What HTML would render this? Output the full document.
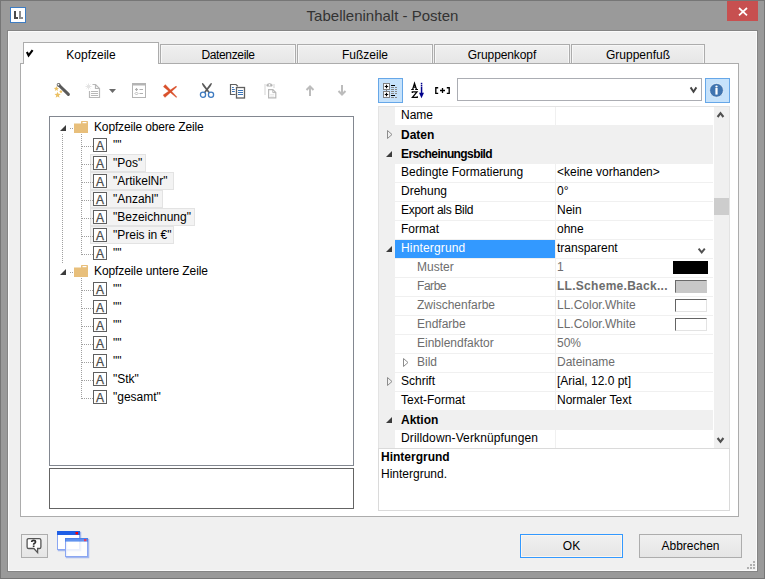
<!DOCTYPE html>
<html><head><meta charset="utf-8">
<style>
*{box-sizing:border-box;margin:0;padding:0}
html,body{width:765px;height:579px;overflow:hidden}
body{position:relative;background:#9a9a9a;font-family:"Liberation Sans",sans-serif;font-size:12px;color:#000}
.a{position:absolute}
svg{position:absolute;overflow:visible}
.t{position:absolute;white-space:nowrap;line-height:14px}
.tab{position:absolute;top:44px;width:136px;height:20px;border:1px solid #acacac;border-bottom:none;background:linear-gradient(#f0f0f0,#e5e5e5);box-shadow:inset 1px 1px 0 #f7f7f7,inset -1px 0 0 #f7f7f7}
.tab span{position:absolute;left:0;right:0;top:3px;text-align:center;white-space:nowrap}
.btn{position:absolute;border:1px solid #adadad;background:linear-gradient(#f0f0f0,#e5e5e5)}
</style></head><body>
<div class="a" style="left:0px;top:0px;width:765px;height:579px;border:1px solid #767676;"></div>
<div class="a" style="left:10px;top:7px;width:16px;height:16px;background:#fff;border:1px solid #3d7cc2;"></div>
<div class="a" style="left:14px;top:11px;width:2px;height:8px;background:#4a4a4a;"></div>
<div class="a" style="left:14px;top:17px;width:4px;height:2px;background:#4a4a4a;"></div>
<div class="a" style="left:19px;top:11px;width:2px;height:8px;background:#8c8c8c;"></div>
<div class="a" style="left:19px;top:17px;width:4px;height:2px;background:#8c8c8c;"></div>
<div class="t" style="left:0;width:765px;top:7px;text-align:center;font-size:15px;line-height:18px;color:#333">Tabelleninhalt - Posten</div>
<div class="a" style="left:727px;top:1px;width:31px;height:20px;background:#c75050;"></div>
<svg style="left:727px;top:1px" width="31" height="20"><path d="M12 7 L20 14.3 M20 7 L12 14.3" stroke="#fff" stroke-width="1.7"/></svg>
<div class="a" style="left:7px;top:30px;width:751px;height:542px;background:#f0f0f0;border:1px solid #858585;box-shadow:inset 1px 1px 0 #fbfbfb,inset -1px -1px 0 #fbfbfb"></div>
<div class="tab" style="left:160px;width:136px"><span style="letter-spacing:-0.35px">Datenzeile</span></div>
<div class="tab" style="left:297px;width:136px"><span style="letter-spacing:0px">Fußzeile</span></div>
<div class="tab" style="left:434px;width:136px"><span style="letter-spacing:-0.1px">Gruppenkopf</span></div>
<div class="tab" style="left:571px;width:134px"><span style="letter-spacing:0px">Gruppenfuß</span></div>
<div class="a" style="left:20px;top:63px;width:719px;height:454px;background:#fff;border:1px solid #acacac;"></div>
<div class="a" style="left:23px;top:42px;width:136px;height:22px;background:#fff;border:1px solid #acacac;border-bottom:none"></div>
<div class="t" style="left:23px;width:136px;top:48px;text-align:center">Kopfzeile</div>
<svg style="left:25px;top:49px" width="10" height="10"><path d="M1.9 3.0 L3.6 6.4 L7.6 1.1" stroke="#000" stroke-width="2.1" fill="none"/></svg>
<svg style="left:52px;top:81px" width="20" height="19">
<path d="M6.8 4 L16.4 13.4" stroke="#5a5a5a" stroke-width="3" stroke-linecap="round"/>
<circle cx="6.6" cy="3.8" r="1.9" fill="#5a5a5a"/><circle cx="6.4" cy="3.7" r="0.9" fill="#fff"/>
<polygon points="4.40,5.10 5.08,6.87 6.97,6.97 5.49,8.16 5.99,9.98 4.40,8.95 2.81,9.98 3.31,8.16 1.83,6.97 3.72,6.87" fill="#ebc063"/><polygon points="5.60,10.70 6.42,12.87 8.74,12.98 6.93,14.43 7.54,16.67 5.60,15.40 3.66,16.67 4.27,14.43 2.46,12.98 4.78,12.87" fill="#ebc063"/><polygon points="8.90,8.70 9.43,9.87 10.71,10.01 9.76,10.88 10.02,12.14 8.90,11.50 7.78,12.14 8.04,10.88 7.09,10.01 8.37,9.87" fill="#ebc063"/>
</svg>
<svg style="left:83px;top:81px" width="20" height="19">
<path d="M9.5 3.5 H12.5 L16.5 7.5 V16.5 H6.5 V10" stroke="#b8b8b8" stroke-width="1.2" fill="#fff"/>
<path d="M12.5 3.5 V7.5 H16.5" stroke="#b8b8b8" stroke-width="1.2" fill="none"/>
<path d="M8 10.5 H15 M8 12.5 H15 M8 14.5 H15" stroke="#b8b8b8" stroke-width="1"/>
<path d="M5.5 2.5 V8.5 M2.5 5.5 H8.5 M3.5 3.5 L7.5 7.5 M7.5 3.5 L3.5 7.5" stroke="#e2e2e2" stroke-width="0.9"/>
</svg>
<svg style="left:108px;top:88px" width="10" height="6"><path d="M1 1 H8 L4.5 5Z" fill="#6a6a6a"/></svg>
<svg style="left:130px;top:81px" width="20" height="19">
<rect x="2.5" y="2.5" width="13" height="14" stroke="#b4b4b4" fill="#fff"/>
<rect x="2" y="2" width="14" height="2.5" fill="#b4b4b4"/>
<path d="M5 8.5 H8 M6.5 7 V10 M9.5 8.5 H13 M9.5 12.5 H13" stroke="#b0b0b0" stroke-width="1.2"/>
<path d="M6.5 11 L8 12.5 L6.5 14 L5 12.5Z" stroke="#b0b0b0" stroke-width="0.9" fill="none"/>
</svg>
<svg style="left:160px;top:81px" width="20" height="19">
<polygon points="3.4,5.7 16.3,16.5 16.9,15.9 5.3,3.6" fill="#d9502b" stroke="#d9502b" stroke-width="0.35" stroke-linejoin="round"/>
<polygon points="4.9,16.4 16.7,5.9 16.1,5.1 3.1,14.1" fill="#d9502b" stroke="#d9502b" stroke-width="0.35" stroke-linejoin="round"/>
</svg>
<svg style="left:197px;top:81px" width="20" height="19">
<path d="M4.9 2 Q6.2 2 7 3.2 L12.9 11.3 L11.5 12 L6.3 5.5 Q4.9 3.6 4.9 2Z" fill="#5a5a5a"/>
<path d="M14.9 2 Q13.6 2 12.8 3.2 L6.9 11.3 L8.3 12 L13.5 5.5 Q14.9 3.6 14.9 2Z" fill="#5a5a5a"/>
<circle cx="6" cy="13.8" r="2.6" stroke="#3d7ac0" stroke-width="1.3" fill="#fff"/>
<circle cx="14" cy="13.8" r="2.6" stroke="#3d7ac0" stroke-width="1.3" fill="#fff"/>
</svg>
<svg style="left:227px;top:81px" width="20" height="19">
<path d="M8.5 13.5 H3.5 V3.5 H9 L10.8 5.2" stroke="#606060" stroke-width="1.2" fill="#fff"/>
<rect x="9.5" y="6.5" width="8" height="10.5" stroke="#606060" stroke-width="1.3" fill="#fff"/>
<path d="M5 6.5 H6.8 M5 8.5 H7.8 M5 10.5 H7.8" stroke="#3a74b8" stroke-width="1"/>
<path d="M11 9.5 H16 M11 11.5 H16 M11 13.5 H16" stroke="#3a74b8" stroke-width="1"/>
</svg>
<svg style="left:261px;top:81px" width="20" height="19">
<path d="M3 3 H14 V7 H12 V5 H5 V14 H3Z" fill="#e9e9e9"/>
<path d="M5.8 5.6 V4.2 Q5.8 2.2 8.5 2.2 Q11.2 2.2 11.2 4.2 V5.6Z" fill="#b2b2b2"/>
<circle cx="8.5" cy="3.9" r="0.9" fill="#fff"/>
<path d="M7.6 8.6 H11.8 L14.8 11.6 V16.8 H7.6Z" stroke="#b8b8b8" stroke-width="1.2" fill="#fff"/>
<path d="M11.8 8.6 V11.6 H14.8" stroke="#b8b8b8" stroke-width="1" fill="none"/>
<path d="M9.2 13.6 H13.2 M9.2 15.2 H13.2" stroke="#e0e0e0" stroke-width="0.8"/>
</svg>
<svg style="left:300px;top:81px" width="50" height="19">
<path d="M10 15 V6 M6.5 9 L10 5.5 L13.5 9" stroke="#bcbcbc" stroke-width="2" fill="none"/>
<path d="M42 4 V13.5 M38.5 10 L42 13.5 L45.5 10" stroke="#bcbcbc" stroke-width="2" fill="none"/>
</svg>
<div class="a" style="left:49px;top:116px;width:305px;height:350px;background:#fff;border:1px solid #828790;"></div>
<div class="a" style="left:49px;top:468px;width:305px;height:41px;background:#fff;border:1px solid #646464;"></div>
<div class="a" style="left:62px;top:134px;width:1px;height:129px;background:repeating-linear-gradient(to bottom,#a0a0a0 0 1px,transparent 1px 2px)"></div>
<div class="a" style="left:81px;top:134px;width:1px;height:121px;background:repeating-linear-gradient(to bottom,#a0a0a0 0 1px,transparent 1px 2px)"></div>
<div class="a" style="left:81px;top:278px;width:1px;height:121px;background:repeating-linear-gradient(to bottom,#a0a0a0 0 1px,transparent 1px 2px)"></div>
<svg style="left:59px;top:124px" width="8" height="8"><path d="M1 7 H7 V1Z" fill="#3c3c3c"/></svg>
<div class="a" style="left:70px;top:128px;width:4px;height:1px;background:repeating-linear-gradient(to right,#a0a0a0 0 1px,transparent 1px 2px)"></div>
<svg style="left:74px;top:121px" width="15" height="13"><path d="M0 2.5 H7 V0.8 Q7 0 7.8 0 H13.2 Q14 0 14 0.8 V12 H0Z" fill="#e8bf7b"/><rect x="8.5" y="1" width="4" height="1.2" fill="#fff"/></svg>
<div class="t" style="left:94px;top:120px;font-size:12px;color:#000;letter-spacing:-0.15px;">Kopfzeile obere Zeile</div>
<div class="a" style="left:82px;top:146px;width:11px;height:1px;background:repeating-linear-gradient(to right,#a0a0a0 0 1px,transparent 1px 2px)"></div>
<div class="a" style="left:93px;top:138px;width:14px;height:14px;background:#fff;border:1px solid #5f5f5f;"></div>
<div class="t" style="left:93px;top:139px;width:14px;text-align:center;font-size:12px;line-height:14px;color:#4a4a4a;-webkit-text-stroke:0.25px #4a4a4a">A</div>
<div class="t" style="left:113px;top:138px;font-size:12px;color:#000;">""</div>
<div class="a" style="left:90px;top:154px;width:56px;height:18px;background:#f3f3f3;border:1px solid #e3e3e3;"></div>
<div class="a" style="left:82px;top:164px;width:11px;height:1px;background:repeating-linear-gradient(to right,#a0a0a0 0 1px,transparent 1px 2px)"></div>
<div class="a" style="left:93px;top:156px;width:14px;height:14px;background:#fff;border:1px solid #5f5f5f;"></div>
<div class="t" style="left:93px;top:157px;width:14px;text-align:center;font-size:12px;line-height:14px;color:#4a4a4a;-webkit-text-stroke:0.25px #4a4a4a">A</div>
<div class="t" style="left:113px;top:156px;font-size:12px;color:#000;">"Pos"</div>
<div class="a" style="left:90px;top:172px;width:84px;height:18px;background:#f3f3f3;border:1px solid #e3e3e3;"></div>
<div class="a" style="left:82px;top:182px;width:11px;height:1px;background:repeating-linear-gradient(to right,#a0a0a0 0 1px,transparent 1px 2px)"></div>
<div class="a" style="left:93px;top:174px;width:14px;height:14px;background:#fff;border:1px solid #5f5f5f;"></div>
<div class="t" style="left:93px;top:175px;width:14px;text-align:center;font-size:12px;line-height:14px;color:#4a4a4a;-webkit-text-stroke:0.25px #4a4a4a">A</div>
<div class="t" style="left:113px;top:174px;font-size:12px;color:#000;">"ArtikelNr"</div>
<div class="a" style="left:90px;top:190px;width:73px;height:18px;background:#f3f3f3;border:1px solid #e3e3e3;"></div>
<div class="a" style="left:82px;top:200px;width:11px;height:1px;background:repeating-linear-gradient(to right,#a0a0a0 0 1px,transparent 1px 2px)"></div>
<div class="a" style="left:93px;top:192px;width:14px;height:14px;background:#fff;border:1px solid #5f5f5f;"></div>
<div class="t" style="left:93px;top:193px;width:14px;text-align:center;font-size:12px;line-height:14px;color:#4a4a4a;-webkit-text-stroke:0.25px #4a4a4a">A</div>
<div class="t" style="left:113px;top:192px;font-size:12px;color:#000;">"Anzahl"</div>
<div class="a" style="left:90px;top:208px;width:105px;height:18px;background:#f3f3f3;border:1px solid #e3e3e3;"></div>
<div class="a" style="left:82px;top:218px;width:11px;height:1px;background:repeating-linear-gradient(to right,#a0a0a0 0 1px,transparent 1px 2px)"></div>
<div class="a" style="left:93px;top:210px;width:14px;height:14px;background:#fff;border:1px solid #5f5f5f;"></div>
<div class="t" style="left:93px;top:211px;width:14px;text-align:center;font-size:12px;line-height:14px;color:#4a4a4a;-webkit-text-stroke:0.25px #4a4a4a">A</div>
<div class="t" style="left:113px;top:210px;font-size:12px;color:#000;">"Bezeichnung"</div>
<div class="a" style="left:90px;top:226px;width:84px;height:18px;background:#f3f3f3;border:1px solid #e3e3e3;"></div>
<div class="a" style="left:82px;top:236px;width:11px;height:1px;background:repeating-linear-gradient(to right,#a0a0a0 0 1px,transparent 1px 2px)"></div>
<div class="a" style="left:93px;top:228px;width:14px;height:14px;background:#fff;border:1px solid #5f5f5f;"></div>
<div class="t" style="left:93px;top:229px;width:14px;text-align:center;font-size:12px;line-height:14px;color:#4a4a4a;-webkit-text-stroke:0.25px #4a4a4a">A</div>
<div class="t" style="left:113px;top:228px;font-size:12px;color:#000;">"Preis in €"</div>
<div class="a" style="left:82px;top:254px;width:11px;height:1px;background:repeating-linear-gradient(to right,#a0a0a0 0 1px,transparent 1px 2px)"></div>
<div class="a" style="left:93px;top:246px;width:14px;height:14px;background:#fff;border:1px solid #5f5f5f;"></div>
<div class="t" style="left:93px;top:247px;width:14px;text-align:center;font-size:12px;line-height:14px;color:#4a4a4a;-webkit-text-stroke:0.25px #4a4a4a">A</div>
<div class="t" style="left:113px;top:246px;font-size:12px;color:#000;">""</div>
<svg style="left:59px;top:268px" width="8" height="8"><path d="M1 7 H7 V1Z" fill="#3c3c3c"/></svg>
<div class="a" style="left:70px;top:272px;width:4px;height:1px;background:repeating-linear-gradient(to right,#a0a0a0 0 1px,transparent 1px 2px)"></div>
<svg style="left:74px;top:265px" width="15" height="13"><path d="M0 2.5 H7 V0.8 Q7 0 7.8 0 H13.2 Q14 0 14 0.8 V12 H0Z" fill="#e8bf7b"/><rect x="8.5" y="1" width="4" height="1.2" fill="#fff"/></svg>
<div class="t" style="left:94px;top:264px;font-size:12px;color:#000;letter-spacing:-0.1px;">Kopfzeile untere Zeile</div>
<div class="a" style="left:82px;top:290px;width:11px;height:1px;background:repeating-linear-gradient(to right,#a0a0a0 0 1px,transparent 1px 2px)"></div>
<div class="a" style="left:93px;top:282px;width:14px;height:14px;background:#fff;border:1px solid #5f5f5f;"></div>
<div class="t" style="left:93px;top:283px;width:14px;text-align:center;font-size:12px;line-height:14px;color:#4a4a4a;-webkit-text-stroke:0.25px #4a4a4a">A</div>
<div class="t" style="left:113px;top:282px;font-size:12px;color:#000;">""</div>
<div class="a" style="left:82px;top:308px;width:11px;height:1px;background:repeating-linear-gradient(to right,#a0a0a0 0 1px,transparent 1px 2px)"></div>
<div class="a" style="left:93px;top:300px;width:14px;height:14px;background:#fff;border:1px solid #5f5f5f;"></div>
<div class="t" style="left:93px;top:301px;width:14px;text-align:center;font-size:12px;line-height:14px;color:#4a4a4a;-webkit-text-stroke:0.25px #4a4a4a">A</div>
<div class="t" style="left:113px;top:300px;font-size:12px;color:#000;">""</div>
<div class="a" style="left:82px;top:326px;width:11px;height:1px;background:repeating-linear-gradient(to right,#a0a0a0 0 1px,transparent 1px 2px)"></div>
<div class="a" style="left:93px;top:318px;width:14px;height:14px;background:#fff;border:1px solid #5f5f5f;"></div>
<div class="t" style="left:93px;top:319px;width:14px;text-align:center;font-size:12px;line-height:14px;color:#4a4a4a;-webkit-text-stroke:0.25px #4a4a4a">A</div>
<div class="t" style="left:113px;top:318px;font-size:12px;color:#000;">""</div>
<div class="a" style="left:82px;top:344px;width:11px;height:1px;background:repeating-linear-gradient(to right,#a0a0a0 0 1px,transparent 1px 2px)"></div>
<div class="a" style="left:93px;top:336px;width:14px;height:14px;background:#fff;border:1px solid #5f5f5f;"></div>
<div class="t" style="left:93px;top:337px;width:14px;text-align:center;font-size:12px;line-height:14px;color:#4a4a4a;-webkit-text-stroke:0.25px #4a4a4a">A</div>
<div class="t" style="left:113px;top:336px;font-size:12px;color:#000;">""</div>
<div class="a" style="left:82px;top:362px;width:11px;height:1px;background:repeating-linear-gradient(to right,#a0a0a0 0 1px,transparent 1px 2px)"></div>
<div class="a" style="left:93px;top:354px;width:14px;height:14px;background:#fff;border:1px solid #5f5f5f;"></div>
<div class="t" style="left:93px;top:355px;width:14px;text-align:center;font-size:12px;line-height:14px;color:#4a4a4a;-webkit-text-stroke:0.25px #4a4a4a">A</div>
<div class="t" style="left:113px;top:354px;font-size:12px;color:#000;">""</div>
<div class="a" style="left:82px;top:380px;width:11px;height:1px;background:repeating-linear-gradient(to right,#a0a0a0 0 1px,transparent 1px 2px)"></div>
<div class="a" style="left:93px;top:372px;width:14px;height:14px;background:#fff;border:1px solid #5f5f5f;"></div>
<div class="t" style="left:93px;top:373px;width:14px;text-align:center;font-size:12px;line-height:14px;color:#4a4a4a;-webkit-text-stroke:0.25px #4a4a4a">A</div>
<div class="t" style="left:113px;top:372px;font-size:12px;color:#000;">"Stk"</div>
<div class="a" style="left:82px;top:398px;width:11px;height:1px;background:repeating-linear-gradient(to right,#a0a0a0 0 1px,transparent 1px 2px)"></div>
<div class="a" style="left:93px;top:390px;width:14px;height:14px;background:#fff;border:1px solid #5f5f5f;"></div>
<div class="t" style="left:93px;top:391px;width:14px;text-align:center;font-size:12px;line-height:14px;color:#4a4a4a;-webkit-text-stroke:0.25px #4a4a4a">A</div>
<div class="t" style="left:113px;top:390px;font-size:12px;color:#000;">"gesamt"</div>
<div class="a" style="left:378px;top:78px;width:25px;height:25px;background:#c6e2fb;border:1px solid #66a7e8;"></div>
<svg style="left:378px;top:78px" width="25" height="25" shape-rendering="crispEdges">
<rect x="5" y="5" width="7" height="7" fill="#808080"/><rect x="6" y="6" width="5" height="5" fill="#fff"/>
<rect x="5" y="13" width="7" height="7" fill="#808080"/><rect x="6" y="14" width="5" height="5" fill="#fff"/>
<rect x="8" y="12" width="1" height="1" fill="#808080"/>
<path d="M6.8 8.5 H10.2 M8.5 6.8 V10.2" stroke="#000" stroke-width="1.2" shape-rendering="auto"/>
<path d="M6.8 16.5 H10.2 M8.5 14.8 V18.2" stroke="#000" stroke-width="1.2" shape-rendering="auto"/>
<rect x="13" y="7" width="4" height="1" fill="#000"/><rect x="13" y="17" width="4" height="1" fill="#000"/>
<g fill="#8a8a8a"><rect x="13" y="9" width="3" height="1"/><rect x="17" y="9" width="2" height="1"/>
<rect x="13" y="11" width="3" height="1"/><rect x="17" y="11" width="2" height="1"/>
<rect x="13" y="13" width="3" height="1"/><rect x="17" y="13" width="2" height="1"/>
<rect x="13" y="15" width="3" height="1"/><rect x="17" y="15" width="2" height="1"/>
<rect x="13" y="19" width="3" height="1"/><rect x="17" y="19" width="2" height="1"/></g>
</svg>
<svg style="left:0;top:0" width="765" height="110">
<path d="M411.2 89.5 H413.8 M415.2 89.5 H418 M412.6 89.5 L414.5 83.3 L416.5 89.5 M413.4 87.2 H415.8" stroke="#000" stroke-width="1.2" fill="none"/>
<path d="M412.3 93 V91.9 H417 L412.4 97.3 H417.3 V96.3" stroke="#000" stroke-width="1.25" fill="none"/>
<rect x="420.8" y="82.8" width="1.5" height="1.5" fill="#00008b"/><rect x="420.8" y="84.9" width="1.5" height="1.5" fill="#00008b"/>
<rect x="420.8" y="86.8" width="1.5" height="7" fill="#00008b"/>
<path d="M419 92.8 H424 L421.5 98.2Z" fill="#00008b"/>
<path d="M438.2 87.7 H435.8 V93.3 H438.2 M446.8 87.7 H449.2 V93.3 H446.8" stroke="#000" stroke-width="1.35" fill="none"/>
<path d="M440 90.5 H445 M442.5 88 V93" stroke="#000" stroke-width="1.3" fill="none"/>
</svg>
<div class="a" style="left:457px;top:78px;width:245px;height:23px;background:#fff;border:1px solid #abadb3;"></div>
<svg style="left:689px;top:86px" width="10" height="8"><path d="M1.6 1.4 L4.5 5.7 L7.4 1.4" stroke="#444" stroke-width="1.9" fill="none"/></svg>
<div class="a" style="left:705px;top:78px;width:25px;height:25px;background:#c6e2fb;border:1px solid #66a7e8;"></div>
<svg style="left:705px;top:78px" width="25" height="25"><circle cx="11.5" cy="12.3" r="6.9" fill="#3f74b0" stroke="#f4f9ff" stroke-width="0.7"/><ellipse cx="11.5" cy="8.4" rx="1.2" ry="1" fill="#fff"/><rect x="10.4" y="10" width="2.2" height="6.6" fill="#fff"/></svg>
<div class="a" style="left:378px;top:106px;width:352px;height:343px;background:#f0f0f0;border:1px solid #e3e3e3;"></div>
<div class="a" style="left:395px;top:107px;width:160px;height:18px;background:#fff;"></div>
<div class="a" style="left:556px;top:107px;width:158px;height:18px;background:#fff;"></div>
<div class="t" style="left:401px;top:108px;font-size:12px;color:#000;">Name</div>
<svg style="left:386px;top:129px" width="8" height="11"><path d="M1.5 1.5 L6 5.5 L1.5 9.5Z" stroke="#8c8c8c" fill="none"/></svg>
<div class="t" style="left:401px;top:128px;font-size:12px;color:#000;font-weight:bold;">Daten</div>
<svg style="left:385px;top:150px" width="8" height="8"><path d="M1 7 H7 V1Z" fill="#3c3c3c"/></svg>
<div class="t" style="left:401px;top:147px;font-size:12px;color:#000;font-weight:bold;letter-spacing:-0.6px;">Erscheinungsbild</div>
<div class="a" style="left:395px;top:164px;width:160px;height:18px;background:#fff;"></div>
<div class="a" style="left:556px;top:164px;width:158px;height:18px;background:#fff;"></div>
<div class="t" style="left:401px;top:165px;font-size:12px;color:#000;">Bedingte Formatierung</div>
<div class="t" style="left:557px;top:165px;font-size:12px;color:#000;">&lt;keine vorhanden&gt;</div>
<div class="a" style="left:395px;top:183px;width:160px;height:18px;background:#fff;"></div>
<div class="a" style="left:556px;top:183px;width:158px;height:18px;background:#fff;"></div>
<div class="t" style="left:401px;top:184px;font-size:12px;color:#000;">Drehung</div>
<div class="t" style="left:557px;top:184px;font-size:12px;color:#000;">0°</div>
<div class="a" style="left:395px;top:202px;width:160px;height:18px;background:#fff;"></div>
<div class="a" style="left:556px;top:202px;width:158px;height:18px;background:#fff;"></div>
<div class="t" style="left:401px;top:203px;font-size:12px;color:#000;letter-spacing:-0.3px;">Export als Bild</div>
<div class="t" style="left:557px;top:203px;font-size:12px;color:#000;">Nein</div>
<div class="a" style="left:395px;top:221px;width:160px;height:18px;background:#fff;"></div>
<div class="a" style="left:556px;top:221px;width:158px;height:18px;background:#fff;"></div>
<div class="t" style="left:401px;top:222px;font-size:12px;color:#000;">Format</div>
<div class="t" style="left:557px;top:222px;font-size:12px;color:#000;">ohne</div>
<div class="a" style="left:395px;top:240px;width:160px;height:18px;background:#3399ff;"></div>
<div class="a" style="left:556px;top:240px;width:158px;height:18px;background:#fff;"></div>
<svg style="left:385px;top:245px" width="8" height="8"><path d="M1 7 H7 V1Z" fill="#3c3c3c"/></svg>
<div class="t" style="left:401px;top:241px;font-size:12px;color:#fff;letter-spacing:0.15px;">Hintergrund</div>
<div class="t" style="left:557px;top:241px;font-size:12px;color:#000;">transparent</div>
<svg style="left:697px;top:247px" width="10" height="8"><path d="M1.6 1.6 L4.7 5.4 L7.8 1.6" stroke="#505050" stroke-width="1.9" fill="none"/></svg>
<div class="a" style="left:395px;top:259px;width:160px;height:18px;background:#fff;"></div>
<div class="a" style="left:556px;top:259px;width:158px;height:18px;background:#fff;"></div>
<div class="t" style="left:417px;top:260px;font-size:12px;color:#6d6d6d;">Muster</div>
<div class="t" style="left:557px;top:260px;font-size:12px;color:#6d6d6d;">1</div>
<div class="a" style="left:395px;top:278px;width:160px;height:18px;background:#fff;"></div>
<div class="a" style="left:556px;top:278px;width:158px;height:18px;background:#fff;"></div>
<div class="t" style="left:417px;top:279px;font-size:12px;color:#6d6d6d;letter-spacing:-0.45px;">Farbe</div>
<div class="t" style="left:557px;top:279px;font-size:12px;color:#6d6d6d;font-weight:bold;letter-spacing:0.28px;">LL.Scheme.Back...</div>
<div class="a" style="left:395px;top:297px;width:160px;height:18px;background:#fff;"></div>
<div class="a" style="left:556px;top:297px;width:158px;height:18px;background:#fff;"></div>
<div class="t" style="left:417px;top:298px;font-size:12px;color:#6d6d6d;">Zwischenfarbe</div>
<div class="t" style="left:557px;top:298px;font-size:12px;color:#6d6d6d;">LL.Color.White</div>
<div class="a" style="left:395px;top:316px;width:160px;height:18px;background:#fff;"></div>
<div class="a" style="left:556px;top:316px;width:158px;height:18px;background:#fff;"></div>
<div class="t" style="left:417px;top:317px;font-size:12px;color:#6d6d6d;">Endfarbe</div>
<div class="t" style="left:557px;top:317px;font-size:12px;color:#6d6d6d;">LL.Color.White</div>
<div class="a" style="left:395px;top:335px;width:160px;height:18px;background:#fff;"></div>
<div class="a" style="left:556px;top:335px;width:158px;height:18px;background:#fff;"></div>
<div class="t" style="left:417px;top:336px;font-size:12px;color:#6d6d6d;">Einblendfaktor</div>
<div class="t" style="left:557px;top:336px;font-size:12px;color:#6d6d6d;">50%</div>
<div class="a" style="left:395px;top:354px;width:160px;height:18px;background:#fff;"></div>
<div class="a" style="left:556px;top:354px;width:158px;height:18px;background:#fff;"></div>
<svg style="left:402px;top:357px" width="8" height="11"><path d="M1.5 1.5 L6 5.5 L1.5 9.5Z" stroke="#8c8c8c" fill="none"/></svg>
<div class="t" style="left:417px;top:355px;font-size:12px;color:#6d6d6d;">Bild</div>
<div class="t" style="left:557px;top:355px;font-size:12px;color:#6d6d6d;">Dateiname</div>
<div class="a" style="left:395px;top:373px;width:160px;height:18px;background:#fff;"></div>
<div class="a" style="left:556px;top:373px;width:158px;height:18px;background:#fff;"></div>
<svg style="left:386px;top:376px" width="8" height="11"><path d="M1.5 1.5 L6 5.5 L1.5 9.5Z" stroke="#8c8c8c" fill="none"/></svg>
<div class="t" style="left:401px;top:374px;font-size:12px;color:#000;">Schrift</div>
<div class="t" style="left:557px;top:374px;font-size:12px;color:#000;">[Arial, 12.0 pt]</div>
<div class="a" style="left:395px;top:392px;width:160px;height:18px;background:#fff;"></div>
<div class="a" style="left:556px;top:392px;width:158px;height:18px;background:#fff;"></div>
<div class="t" style="left:401px;top:393px;font-size:12px;color:#000;">Text-Format</div>
<div class="t" style="left:557px;top:393px;font-size:12px;color:#000;">Normaler Text</div>
<svg style="left:385px;top:416px" width="8" height="8"><path d="M1 7 H7 V1Z" fill="#3c3c3c"/></svg>
<div class="t" style="left:401px;top:413px;font-size:12px;color:#000;font-weight:bold;">Aktion</div>
<div class="a" style="left:395px;top:430px;width:160px;height:18px;background:#fff;"></div>
<div class="a" style="left:556px;top:430px;width:158px;height:18px;background:#fff;"></div>
<div class="t" style="left:401px;top:431px;font-size:12px;color:#000;letter-spacing:0.13px;">Drilldown-Verknüpfungen</div>
<div class="a" style="left:673px;top:261px;width:35px;height:13px;background:#000;"></div>
<div class="a" style="left:675px;top:280px;width:32px;height:13px;background:#c8c8c8;border:1px solid #c8c8c8;border-top-color:#6a6a6a;border-left-color:#6a6a6a"></div>
<div class="a" style="left:675px;top:299px;width:32px;height:13px;background:#fff;border:1px solid #e3e3e3;border-top-color:#646464;border-left-color:#646464"></div>
<div class="a" style="left:675px;top:318px;width:32px;height:13px;background:#fff;border:1px solid #e3e3e3;border-top-color:#646464;border-left-color:#646464"></div>
<div class="a" style="left:714px;top:107px;width:15px;height:341px;background:#f0f0f0;"></div>
<div class="a" style="left:713px;top:107px;width:1px;height:341px;background:#fff;"></div>
<svg style="left:0;top:0" width="765" height="460"><path d="M717.6 117 L720.5 113.2 L723.4 117" stroke="#505050" stroke-width="2.1" fill="none"/><path d="M717.6 438 L720.5 441.8 L723.4 438" stroke="#505050" stroke-width="2.1" fill="none"/></svg>

<div class="a" style="left:714px;top:198px;width:15px;height:17px;background:#cdcdcd;"></div>
<div class="a" style="left:378px;top:448px;width:352px;height:63px;background:#fff;border:1px solid #dadada;"></div>
<div class="t" style="left:381px;top:450px;font-size:12px;color:#000;font-weight:bold;">Hintergrund</div>
<div class="t" style="left:381px;top:467px;font-size:12px;color:#000;">Hintergrund.</div>
<div class="a" style="left:21px;top:534px;width:27px;height:24px;background:linear-gradient(#f0f0f0,#e5e5e5);border:1px solid #adadad;"></div>
<svg style="left:21px;top:534px" width="27" height="25">
<path d="M7.7 4.6 H18.3 Q19.9 4.6 19.9 6.2 V12.9 Q19.9 14.5 18.3 14.5 H16.6 V18.6 L12.9 14.5 H7.7 Q6.1 14.5 6.1 12.9 V6.2 Q6.1 4.6 7.7 4.6Z" stroke="#555" stroke-width="1.3" fill="#fff"/>
<path d="M10.7 8.1 Q10.7 6.4 12.6 6.4 Q14.5 6.4 14.5 8 Q14.5 9 13.3 9.5 Q12.6 9.9 12.6 10.8" stroke="#333" stroke-width="1.7" fill="none"/><rect x="11.8" y="11.5" width="1.7" height="1.5" fill="#333"/>
</svg>
<svg style="left:0;top:0" width="765" height="579">
<defs><filter id="gl" x="-30%" y="-30%" width="160%" height="160%"><feGaussianBlur stdDeviation="0.6"/></filter></defs>
<rect x="58.5" y="532.5" width="22" height="18" fill="none" stroke="#6f93ee" stroke-width="1.5" opacity="0.6" filter="url(#gl)"/>
<rect x="57.5" y="531.5" width="22" height="18" fill="#fff" stroke="#8aa6f2" stroke-width="1"/>
<rect x="57" y="531" width="23" height="4" fill="#1f5fe6"/>
<rect x="75.5" y="532" width="2.6" height="2.4" fill="#f00"/>
<rect x="66.5" y="539.5" width="22" height="18" fill="none" stroke="#7393ee" stroke-width="1.5" opacity="0.6" filter="url(#gl)"/>
<rect x="65.5" y="538.5" width="22" height="18" fill="rgba(255,255,255,0.82)" stroke="#8aa6f2" stroke-width="1"/>
<rect x="65" y="538" width="23" height="3.6" fill="#3b78ea" opacity="0.8"/>
<rect x="84" y="539" width="2.4" height="2.2" fill="#e63c5c"/>
</svg>
<div class="a" style="left:520px;top:534px;width:103px;height:24px;background:linear-gradient(#f0f0f0,#e5e5e5);border:1px solid #3399ff;box-shadow:inset 0 0 0 1px #fdf6ee"></div>
<div class="t" style="left:520px;width:103px;top:539px;text-align:center">OK</div>
<div class="a" style="left:639px;top:534px;width:103px;height:24px;background:linear-gradient(#f0f0f0,#e5e5e5);border:1px solid #adadad;"></div>
<div class="t" style="left:639px;width:103px;top:539px;text-align:center">Abbrechen</div>
<div class="a" style="left:753px;top:561px;width:2px;height:2px;background:#b0b0b0;"></div>
<div class="a" style="left:750px;top:564px;width:2px;height:2px;background:#b0b0b0;"></div>
<div class="a" style="left:753px;top:564px;width:2px;height:2px;background:#b0b0b0;"></div>
<div class="a" style="left:747px;top:567px;width:2px;height:2px;background:#b0b0b0;"></div>
<div class="a" style="left:750px;top:567px;width:2px;height:2px;background:#b0b0b0;"></div>
<div class="a" style="left:753px;top:567px;width:2px;height:2px;background:#b0b0b0;"></div>
</body></html>
